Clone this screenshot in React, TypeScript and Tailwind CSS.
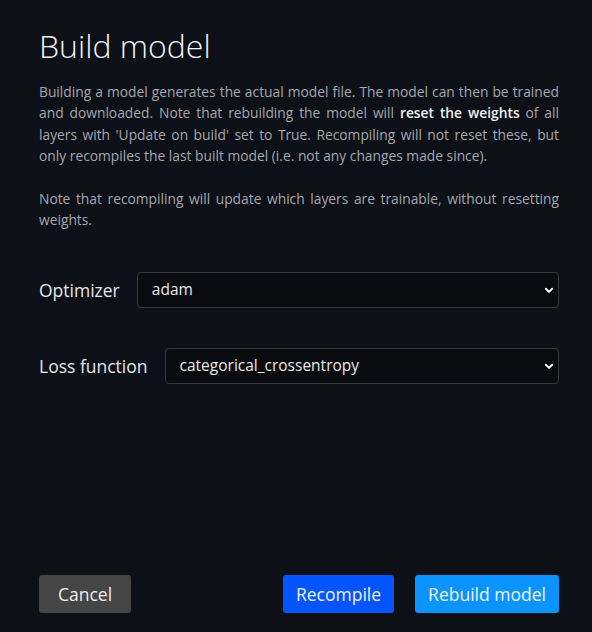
const OPTIMIZERS = ['adam', 'sgd', 'rmsprop', 'adagrad']
const LOSSES = ['categorical_crossentropy', 'binary_crossentropy', 'mean_squared_error']

function SelectRow({ label, value, options }: { label: string; value: string; options: string[] }) {
  return (
    <div className="flex items-center gap-[17px]">
      <label className="text-[17.5px] text-[#e4e6ea] whitespace-nowrap">{label}</label>
      <div className="relative flex-1">
        <select
          defaultValue={value}
          className="w-full h-[36px] appearance-none rounded-[4px] border border-[#34373d] bg-[#0a0b0f] pl-[14px] pr-8 text-[15.5px] text-[#e8e9ec] outline-none"
        >
          {options.map((o) => (
            <option key={o}>{o}</option>
          ))}
        </select>
        <svg
          className="pointer-events-none absolute right-[5px] top-1/2 -translate-y-1/2"
          width="10"
          height="10"
          viewBox="0 0 16 16"
          fill="none"
          stroke="#ffffff"
          strokeWidth="3"
          strokeLinecap="round"
          strokeLinejoin="round"
        >
          <path d="M3 6l5 5 5-5" />
        </svg>
      </div>
    </div>
  )
}

export default function App() {
  return (
    <div
      className="w-[592px] h-[632px] bg-[#0d1017] pl-[39px] pr-[33px] pt-[26px] pb-[19px] flex flex-col"
      style={{ fontFamily: '"Open Sans", "Noto Sans", sans-serif' }}
    >
      <h1 className="text-[32px] font-light text-[#f2f3f5] leading-[40px]">Build model</h1>
      <div className="mt-[15px] text-[13.8px] leading-[21.4px] text-[#a4a7ad] text-justify">
        <p>
          Building a model generates the actual model file. The model can then be trained and downloaded. Note that
          rebuilding the model will <span className="font-semibold text-[#eef0f2]">reset the weights</span> of all
          layers with 'Update on build' set to True. Recompiling will not reset these, but only recompiles the last
          built model (i.e. not any changes made since).
        </p>
        <p className="mt-[21.4px]">
          Note that recompiling will update which layers are trainable, without resetting weights.
        </p>
      </div>

      <div className="mt-[41px] flex flex-col gap-[40px]">
        <SelectRow label="Optimizer" value="adam" options={OPTIMIZERS} />
        <SelectRow label="Loss function" value="categorical_crossentropy" options={LOSSES} />
      </div>

      <div className="mt-auto flex items-center">
        <button className="h-[38px] w-[92px] rounded-[3px] bg-[#454545] text-[17.5px] text-[#eeeeee]">Cancel</button>
        <div className="ml-auto flex gap-[21px]">
          <button className="h-[38px] w-[111px] rounded-[3px] bg-[#0455ff] text-[17.5px] text-[#eef2ff]">
            Recompile
          </button>
          <button className="h-[38px] w-[144px] rounded-[3px] bg-[#0b93ff] text-[17.5px] text-[#eef6ff]">
            Rebuild model
          </button>
        </div>
      </div>
    </div>
  )
}
